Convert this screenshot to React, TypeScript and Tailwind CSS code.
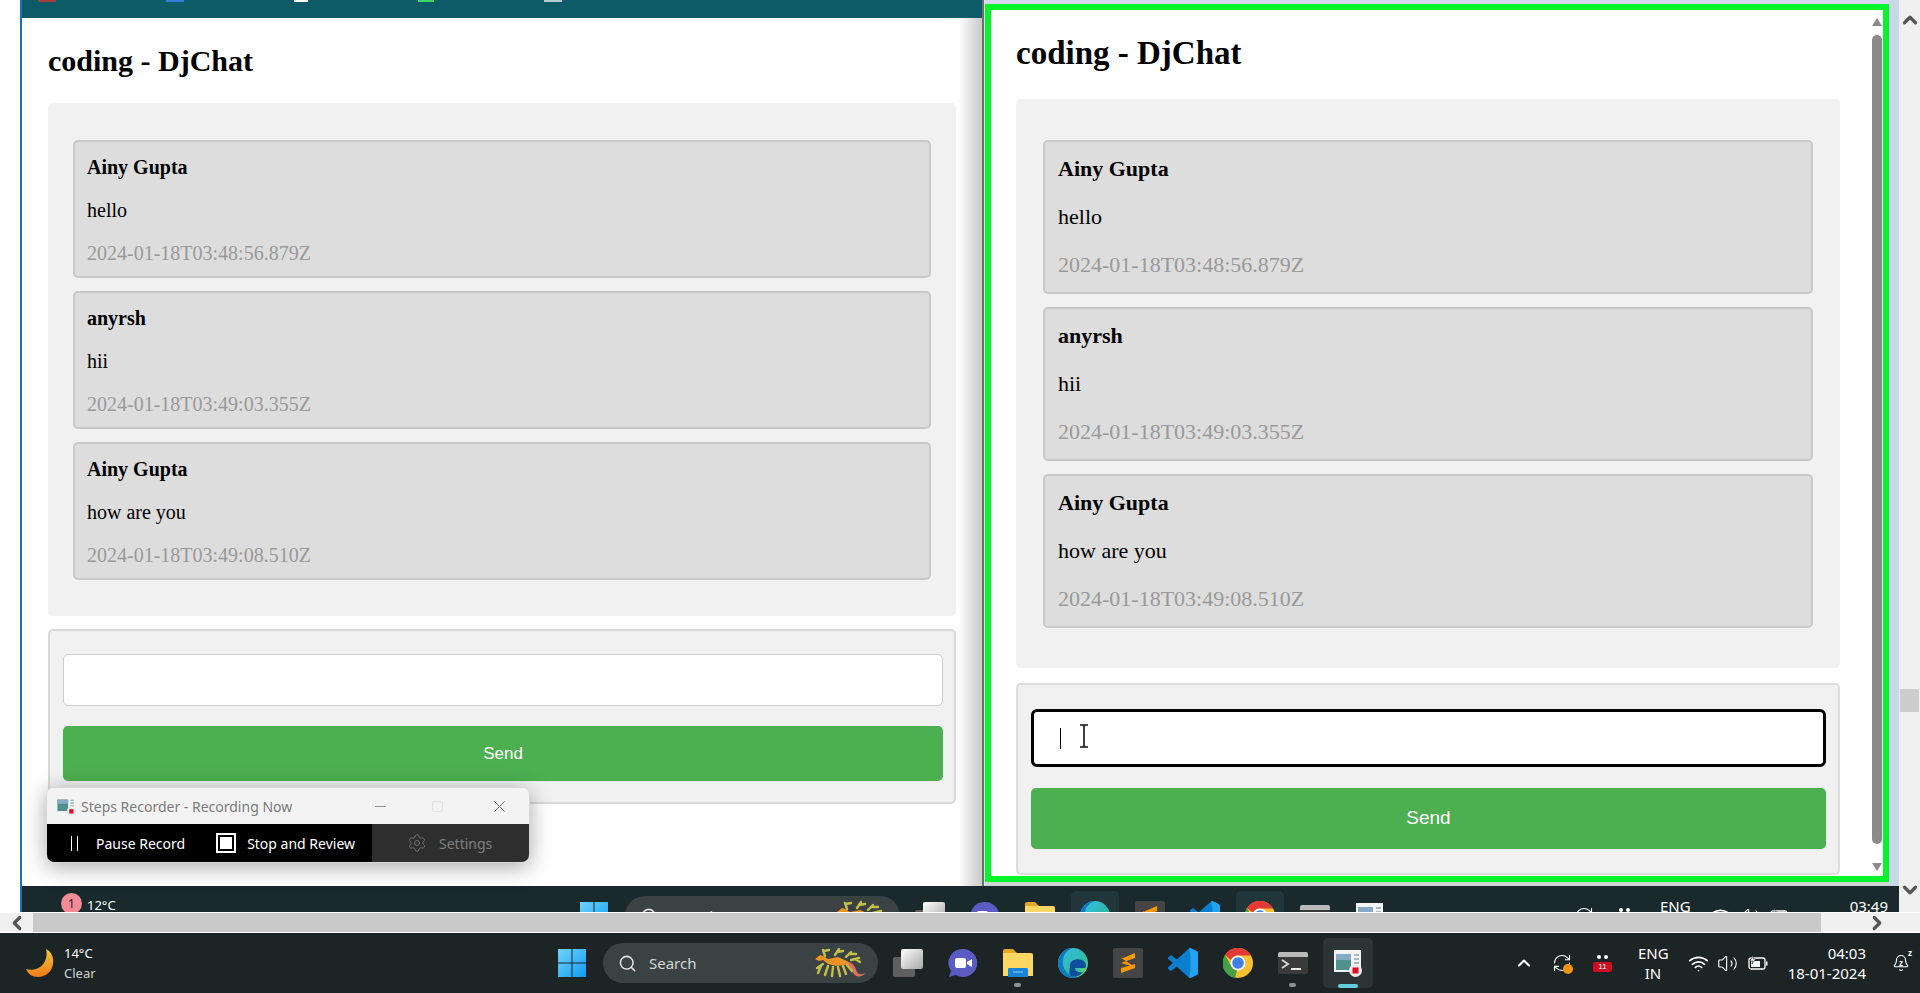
import { ChevronDown, ChevronLeft, ChevronRight, ChevronUp, Minus, Search, Settings, Square, Volume2, Wifi, X, Bell, RefreshCw } from 'lucide-react';
import type { ReactNode } from 'react';

const messages = [
  { name: 'Ainy Gupta', text: 'hello', time: '2024-01-18T03:48:56.879Z' },
  { name: 'anyrsh', text: 'hii', time: '2024-01-18T03:49:03.355Z' },
  { name: 'Ainy Gupta', text: 'how are you', time: '2024-01-18T03:49:08.510Z' },
];

function WinLogo() {
  return (
    <svg width="30" height="30" viewBox="0 0 30 30">
      <defs>
        <linearGradient id="wl" x1="0" y1="0" x2="1" y2="1">
          <stop offset="0" stopColor="#6fd4fb" />
          <stop offset="1" stopColor="#0f9bf2" />
        </linearGradient>
      </defs>
      <path d="M1 1h13.5v13.5H1zM15.5 1H29v13.5H15.5zM1 15.5h13.5V29H1zM15.5 15.5H29V29H15.5z" fill="url(#wl)" />
    </svg>
  );
}

function Moon() {
  return (
    <svg width="28" height="30" viewBox="0 0 28 30">
      <defs>
        <linearGradient id="mn" x1="0" y1="0" x2="0" y2="1">
          <stop offset="0" stopColor="#f5c53f" />
          <stop offset="1" stopColor="#ee7d17" />
        </linearGradient>
      </defs>
      <path d="M20 1c6 3 8 9 7 15-1 8-8 13-15 13C6 29 2 26 0 21c7 2 14 0 18-6 3-5 3-10 2-14Z" fill="url(#mn)" />
    </svg>
  );
}

function SeaDragon() {
  return (
    <svg width="54" height="32" viewBox="0 0 54 32">
      <path d="M33 15c5 0 8 4 9 8 1 3 3 5 7 4l2-1c-2 4-8 5-11 1-3-4-4-8-8-9Z" fill="#e0705e" />
      <g stroke="#c3c04a" strokeWidth="2.4" fill="none" strokeLinecap="round">
        <path d="M11 9 9 3M10 4l5-1M21 8l4-6M23 5l6-1M32 10l5-5M35 7l7 0M37 13l8-2M41 12l5 3M9 17 3 21M7 19l-3 7M14 19l-3 9M19 20l-1 9M24 20l2 9M29 19l3 8M33 18l5 6" />
      </g>
      <path d="M1 12l5-4 3 1 5 3 10-2 9 4 3 2-5 2-9 1-8-2-5-4-4 1Z" fill="#ee9322" />
    </svg>
  );
}

function TaskView() {
  return (
    <div className="relative h-[28px] w-[30px]">
      <div className="absolute bottom-0 left-0 h-[20px] w-[22px] rounded-[2px] bg-[#5f5f5f]" />
      <div className="absolute right-0 top-0 h-[20px] w-[22px] rounded-[2px] bg-gradient-to-br from-[#ffffff] to-[#a9a9a9]" />
    </div>
  );
}

function Meet() {
  return (
    <svg width="30" height="30" viewBox="0 0 30 30">
      <path d="M15 1a14 14 0 1 1-7 26L1 29l2-6A14 14 0 0 1 15 1Z" fill="#5b5bc4" />
      <rect x="7" y="10" width="11" height="10" rx="2" fill="#fff" />
      <path d="M19 14l5-3v8l-5-3Z" fill="#fff" />
    </svg>
  );
}

function Folder() {
  return (
    <svg width="30" height="28" viewBox="0 0 30 28">
      <path d="M0 2a2 2 0 0 1 2-2h8l4 4H0Z" fill="#e5a823" />
      <path d="M0 4h28a2 2 0 0 1 2 2v21H0Z" fill="#fdd663" />
      <path d="M5 20a1 1 0 0 1 1-1h18a1 1 0 0 1 1 1v8H5Z" fill="#1a84d6" />
      <path d="M10 23h10" stroke="#8fd0f7" strokeWidth="1" />
    </svg>
  );
}

function Edge() {
  return (
    <svg width="30" height="30" viewBox="0 0 30 30">
      <defs>
        <linearGradient id="eg" x1="0" y1="0" x2="1" y2="1">
          <stop offset="0" stopColor="#35c1f1" />
          <stop offset="0.6" stopColor="#2fb8a8" />
          <stop offset="1" stopColor="#7ee05c" />
        </linearGradient>
      </defs>
      <circle cx="15" cy="15" r="15" fill="url(#eg)" />
      <path d="M0 15C0 6 8 0 15 0c-6 2-11 7-10 16 1 8 8 14 15 13-2 1-4 1-6 1C6 30 0 23 0 15Z" fill="#0f7ac4" />
      <path d="M12 17c0-5 7-7 12-5 4 2 5 5 3 8H17c0 3 4 5 8 4-3 4-8 6-12 4-3-2-1-7-1-11Z" fill="#0c4f9f" />
    </svg>
  );
}

function Sublime() {
  return (
    <div className="flex h-[30px] w-[30px] items-center justify-center rounded-[2px] bg-[#454545]">
      <svg width="16" height="20" viewBox="0 0 16 20">
        <path d="M15 0v5L1 10V6ZM1 10l14 4-14-9ZM1 15v5l14-5v-4Z" fill="#ff9800" />
      </svg>
    </div>
  );
}

function VsCode() {
  return (
    <svg width="30" height="30" viewBox="0 0 100 100">
      <path
        d="M70.9 99.3a6.2 6.2 0 0 0 5-.2l20.6-9.9a6.2 6.2 0 0 0 3.5-5.6V16.4a6.2 6.2 0 0 0-3.5-5.6L75.9.9a6.2 6.2 0 0 0-7.1 1.2L29.4 38 12.2 25a4.2 4.2 0 0 0-5.3.2l-5.5 5a4.2 4.2 0 0 0 0 6.2L16.3 50 1.4 63.6a4.2 4.2 0 0 0 0 6.2l5.5 5a4.2 4.2 0 0 0 5.3.2l17.2-13 39.4 36a6.2 6.2 0 0 0 2.1 1.3ZM75 27.3 45.1 50 75 72.7V27.3Z"
        fill="#0a7fd0"
      />
      <path d="M70 1 75.9.9l20.6 9.9a6 6 0 0 1 3.5 5.6v67.2a6 6 0 0 1-3.5 5.6L75.9 99.1 70 99l5-26.3V27.3Z" fill="#1fa4ef" />
    </svg>
  );
}

function Chrome() {
  return (
    <svg width="30" height="30" viewBox="0 0 30 30">
      <circle cx="15" cy="15" r="15" fill="#fbc02d" />
      <path d="M15 0a15 15 0 0 1 13 7.5H15a7.5 7.5 0 0 0-7 4.5L2 7A15 15 0 0 1 15 0Z" fill="#e53935" />
      <path d="M2 7l6.5 11.5a7.5 7.5 0 0 0 5.5 4L12 30A15 15 0 0 1 2 7Z" fill="#43a047" />
      <circle cx="15" cy="15" r="7.5" fill="#fff" />
      <circle cx="15" cy="15" r="5.8" fill="#3f7fe8" />
    </svg>
  );
}

function Terminal() {
  return (
    <div className="flex h-[22px] w-[30px] flex-col overflow-hidden rounded-[2px] bg-[#3a3a3a]">
      <div className="h-[5px] bg-[#b9b9b9]" />
      <svg width="30" height="17" viewBox="0 0 30 17">
        <path d="M4 3l6 4-6 4" stroke="#d4d4d4" strokeWidth="2" fill="none" />
        <path d="M13 12h10" stroke="#e8e8e8" strokeWidth="2" />
      </svg>
    </div>
  );
}

function Recorder({ size = 28 }: { size?: number }) {
  return (
    <svg width={size} height={size} viewBox="0 0 28 28">
      <rect x="0" y="1" width="27" height="22" fill="#f4f4f4" />
      <rect x="2" y="5" width="15" height="16" fill="#4f8f8c" />
      <rect x="2" y="5" width="15" height="6" fill="#86a9c4" />
      <path d="M20 6h5M20 10h5M20 14h5" stroke="#8aa" strokeWidth="1.5" />
      <circle cx="21.5" cy="21.5" r="6.5" fill="#ececec" />
      <rect x="18.5" y="18.5" width="6" height="6" fill="#d90f1e" />
    </svg>
  );
}

function CalendarTray() {
  return (
    <div className="flex w-[19px] flex-col items-center">
      <div className="flex gap-[3px]">
        <div className="h-[4px] w-[4px] rounded-full bg-white" />
        <div className="h-[4px] w-[4px] rounded-full bg-white" />
      </div>
      <div className="mt-[3px] flex h-[10px] w-[19px] items-center justify-center rounded-[2px] bg-[#d10b22] font-['Liberation_Sans',sans-serif] text-[8px] leading-none text-white">
        11
      </div>
    </div>
  );
}

function BatteryTray() {
  return (
    <svg width="20" height="16" viewBox="0 0 20 16">
      <rect x="1" y="3" width="16" height="11" rx="2" fill="none" stroke="#fff" strokeWidth="1.3" />
      <rect x="3" y="6" width="9" height="6" fill="#fff" />
      <rect x="18" y="6.5" width="1.5" height="4" fill="#fff" />
      <path d="M5 0 2 6h3L4 9l4-5H5Z" fill="#fff" stroke="#1c2426" strokeWidth="0.6" />
    </svg>
  );
}

function IconSlot({ children, dot, lit }: { children: ReactNode; dot?: boolean; lit?: boolean }) {
  return (
    <div className="relative flex h-[60px] w-[55px] items-center justify-center">
      {lit && <div className="absolute h-[50px] w-[48px] rounded-[5px] bg-[#21363a]" />}
      <div className="relative flex items-center justify-center">{children}</div>
      {dot && <div className="absolute bottom-[6px] h-[4px] w-[7px] rounded-full bg-[#8e9294]" />}
    </div>
  );
}

function Taskbar({ weather, time, date, behind }: { weather: ReactNode; time: string; date: string; behind?: boolean }) {
  return (
    <div className="flex h-[60px] w-[1920px] shrink-0 items-center font-['Noto_Sans',sans-serif] text-white">
      <div className="h-[60px] w-[544px]">{weather}</div>
      <IconSlot>
        <WinLogo />
      </IconSlot>
      <div className="ml-[4px] flex h-[40px] w-[275px] items-center rounded-full bg-[#3b4244] pl-[15px] pr-[10px]">
        <Search size={19} className="text-[#e0e0e0]" />
        <span className="ml-[12px] text-[15px] text-[#d4d6d6]">Search</span>
        <div className="ml-auto">
          <SeaDragon />
        </div>
      </div>
      <div className="ml-[2px] flex">
        <IconSlot>
          <TaskView />
        </IconSlot>
        <IconSlot>
          <Meet />
        </IconSlot>
        <IconSlot dot>
          <Folder />
        </IconSlot>
        <IconSlot lit={behind}>
          <Edge />
        </IconSlot>
        <IconSlot>
          <Sublime />
        </IconSlot>
        <IconSlot>
          <VsCode />
        </IconSlot>
        <IconSlot lit={behind}>
          <Chrome />
        </IconSlot>
        <IconSlot dot>
          <Terminal />
        </IconSlot>
        <div className="relative flex h-[60px] w-[55px] items-center justify-center">
          <div className={behind ? 'flex h-[50px] w-[50px] items-center justify-center' : 'flex h-[50px] w-[50px] items-center justify-center rounded-[5px] bg-[#2d3436]'}>
            <Recorder />
          </div>
          <div className="absolute bottom-[5px] h-[4px] w-[20px] rounded-full bg-[#60cdd8]" />
        </div>
      </div>
      <div className="ml-auto flex items-center pr-[10px]">
        <ChevronUp size={20} strokeWidth={2.5} className="mr-[18px]" />
        <div className="relative mr-[21px]">
          <RefreshCw size={20} strokeWidth={1.3} />
          <div className="absolute -bottom-[1px] -right-[1px] h-[10px] w-[10px] rounded-full bg-[#f7940c]" />
        </div>
        <CalendarTray />
        <div className="ml-[26px] w-[30px] text-center text-[15px] leading-[20px]">
          <div>ENG</div>
          <div>IN</div>
        </div>
        <Wifi size={21} className="ml-[20px]" />
        <Volume2 size={21} strokeWidth={1.3} className="ml-[8px]" />
        <div className="ml-[10px]">
          <BatteryTray />
        </div>
        <div className="ml-[10px] w-[88px] text-right text-[15px] leading-[20px]">
          <div>{time}</div>
          <div>{date}</div>
        </div>
        <div className="relative ml-[26px] flex items-center justify-center">
          <Bell size={18} strokeWidth={1.5} />
          <span className="absolute text-[8px] font-bold leading-none">z</span>
          <span className="absolute -right-[2px] -top-[5px] text-[8px] font-bold leading-none">z</span>
        </div>
      </div>
    </div>
  );
}

function MessageCard({ name, text, time, big }: { name: string; text: string; time: string; big?: boolean }) {
  return (
    <div
      className={
        big
          ? 'rounded-[5px] border-2 border-[#c9c9c9] bg-[#dddddd] px-[13px] pb-[15px] pt-[14px] text-[22px] leading-[25px]'
          : 'rounded-[5px] border-2 border-[#c9c9c9] bg-[#dddddd] pb-[11.5px] pl-[12px] pr-[10px] pt-[13.5px] text-[20px] leading-[23px]'
      }
    >
      <p className="font-bold">{name}</p>
      <p className={big ? 'mt-[23px]' : 'mt-[20px]'}>{text}</p>
      <p className={big ? 'mt-[23px] text-[#999999]' : 'mt-[20px] text-[#999999]'}>{time}</p>
    </div>
  );
}

function RecorderWindow() {
  return (
    <div className="absolute left-[46px] top-[787px] w-[484px] overflow-hidden rounded-[8px] border border-[#d8d8d8] font-['Noto_Sans',sans-serif] shadow-[0_4px_22px_rgba(0,0,0,0.35)]">
      <div className="flex h-[36px] items-center bg-[#f3f3f3] pl-[9px] text-[#7b7b7b]">
        <Recorder size={20} />
        <span className="ml-[5px] text-[14px]">Steps Recorder - Recording Now</span>
        <Minus size={17} strokeWidth={1} className="ml-auto mr-[42px] text-[#666666]" />
        <Square size={13} strokeWidth={1} className="mr-[46px] text-[#d0d0d0]" />
        <X size={19} strokeWidth={1.2} className="mr-[20px] text-[#666666]" />
      </div>
      <div className="flex h-[38px] text-[14px] text-white">
        <div className="flex w-[325px] items-center bg-black">
          <div className="ml-[24px] flex gap-[5px]">
            <div className="h-[15px] w-[1px] bg-white" />
            <div className="h-[15px] w-[1px] bg-white" />
          </div>
          <span className="ml-[18px]">Pause Record</span>
          <div className="ml-[31px] flex h-[20px] w-[20px] items-center justify-center border-2 border-white">
            <div className="h-[12px] w-[12px] bg-white" />
          </div>
          <span className="ml-[11px]">Stop and Review</span>
        </div>
        <div className="flex flex-1 items-center bg-[#2e2e2e] pl-[35px] text-[#7f7f7f]">
          <Settings size={20} strokeWidth={1} />
          <span className="ml-[12px]">Settings</span>
        </div>
      </div>
    </div>
  );
}

export default function App() {
  return (
    <div className="relative flex h-[993px] w-[1920px] flex-col overflow-hidden bg-white font-['Liberation_Serif',serif] text-black">
      <div className="flex h-[912px] shrink-0">
        <div className="w-[20px] bg-white" />
        <div className="flex w-[1879px] flex-col border-l-2 border-[#1673b5]">
          <div className="flex h-[886px]">
            {/* left window */}
            <div className="relative flex w-[960px] flex-col bg-white">
              <div className="flex h-[18px] gap-[110px] bg-[#0d5b66] pl-[16px]">
                <div className="h-[2px] w-[18px] bg-[#a83a3a]" />
                <div className="h-[2px] w-[18px] bg-[#2b7fd8]" />
                <div className="h-[2px] w-[14px] bg-white" />
                <div className="h-[2px] w-[16px] bg-[#3dd869]" />
                <div className="h-[2px] w-[18px] bg-[#b7cbcb]" />
              </div>
              <div className="flex flex-1 flex-col pl-[26px] pr-[26px]">
                <h1 className="mt-[26px] text-[30px] font-bold leading-[34px]">coding - DjChat</h1>
                <div className="mt-[25px] flex flex-col gap-[13px] rounded-[5px] bg-[#f1f1f1] px-[25px] pb-[36px] pt-[37px]">
                  {messages.map((m) => (
                    <MessageCard key={m.time} {...m} />
                  ))}
                </div>
                <div className="mt-[13px] rounded-[5px] border-2 border-[#d9d9d9] bg-[#f1f1f1] pb-[21px] pl-[13px] pr-[11px] pt-[23px]">
                  <div className="h-[52px] rounded-[5px] border border-[#cccccc] bg-white" />
                  <div className="mt-[20px] flex h-[55px] items-center justify-center rounded-[5px] bg-[#4caf50] font-['Liberation_Sans',sans-serif] text-[17px] text-white">
                    Send
                  </div>
                </div>
              </div>
              <div className="absolute bottom-0 right-0 top-[18px] w-[24px] bg-gradient-to-r from-transparent to-[#c9c9c9]" />
            </div>

            {/* right window */}
            <div className="flex flex-1 flex-col border-l-2 border-[#6d6d6d] bg-[#e4e6e8] pl-[1px]">
              <div className="h-[4px] bg-[#d8d4f2]" />
              <div className="flex h-[878px] border-[6px] border-[#06f52a] bg-white">
                <div className="flex flex-1 flex-col pl-[25px] pr-[30px]">
                  <h1 className="mt-[24px] text-[33px] font-bold leading-[38px]">coding - DjChat</h1>
                  <div className="mt-[27px] flex flex-col gap-[13px] rounded-[5px] bg-[#f1f1f1] pb-[40px] pl-[27px] pr-[27px] pt-[41px]">
                    {messages.map((m) => (
                      <MessageCard key={m.time} {...m} big />
                    ))}
                  </div>
                  <div className="mb-[1px] mt-[15px] flex-1 rounded-[5px] border-2 border-[#dddddd] bg-[#f1f1f1] pl-[13px] pr-[12px] pt-[24px]">
                    <div className="relative flex h-[58px] items-center rounded-[6px] border-[3px] border-black bg-white pl-[26px]">
                      <div className="h-[21px] w-[1px] bg-black" />
                      <svg width="10" height="24" viewBox="0 0 10 24" className="absolute left-[45px] top-[12px]">
                        <path d="M1 1h8M1 23h8M5 1v22" stroke="#111111" strokeWidth="1.6" fill="none" />
                      </svg>
                    </div>
                    <div className="mt-[21px] flex h-[61px] items-center justify-center rounded-[5px] bg-[#4caf50] font-['Liberation_Sans',sans-serif] text-[19px] text-white">
                      Send
                    </div>
                  </div>
                </div>
                <div className="flex w-[13px] flex-col items-center">
                  <div className="mt-[8px] h-0 w-0 border-x-[5px] border-b-[8px] border-x-transparent border-b-[#8a8a8a]" />
                  <div className="mt-[9px] w-[10px] flex-1 rounded-full bg-[#8a8a8a]" />
                  <div className="mb-[5px] mt-[19px] h-0 w-0 border-x-[5px] border-t-[8px] border-x-transparent border-t-[#8a8a8a]" />
                </div>
              </div>
              <div className="h-[4px] bg-[#cfd4d4]" />
            </div>
            <div className="w-[10px] bg-[#c6d9e6]" />
          </div>

          {/* window behind, its taskbar is cut off */}
          <div className="h-[26px] overflow-hidden bg-[#1a2a2c]">
            <Taskbar
              behind
              time="03:49"
              date="18-01-2024"
              weather={
                <div className="flex items-start pl-[39px] pt-[7px]">
                  <div className="flex h-[21px] w-[21px] items-center justify-center rounded-full bg-[#f28b96] text-[12px] text-[#3a1015]">
                    1
                  </div>
                  <span className="ml-[5px] mt-[3px] text-[13px] leading-[18px]">12°C</span>
                </div>
              }
            />
          </div>
        </div>

        {/* outer vertical scrollbar */}
        <div className="flex w-[21px] flex-col items-center bg-[#f0f0f0] text-[#555555]">
          <ChevronUp size={22} strokeWidth={3.5} className="mt-[9px]" />
          <div className="mt-[658px] h-[23px] w-[19px] bg-[#cdcdcd]" />
          <ChevronDown size={22} strokeWidth={3.5} className="mt-[167px]" />
        </div>
      </div>

      {/* outer horizontal scrollbar */}
      <div className="flex h-[21px] shrink-0 items-center border-y border-white bg-[#f0f0f0] text-[#555555]">
        <div className="flex w-[33px] justify-center">
          <ChevronLeft size={22} strokeWidth={3.5} />
        </div>
        <div className="h-full w-[1788px] bg-[#c9c9c9]" />
        <ChevronRight size={22} strokeWidth={3.5} className="ml-[45px]" />
      </div>

      <div className="h-[60px] shrink-0 bg-[#1c2426]">
        <Taskbar
          time="04:03"
          date="18-01-2024"
          weather={
            <div className="flex h-full items-center pl-[26px]">
              <Moon />
              <div className="ml-[10px] text-[13px] leading-[20px]">
                <div>14°C</div>
                <div className="text-[#d0d3d3]">Clear</div>
              </div>
            </div>
          }
        />
      </div>

      <RecorderWindow />
    </div>
  );
}
